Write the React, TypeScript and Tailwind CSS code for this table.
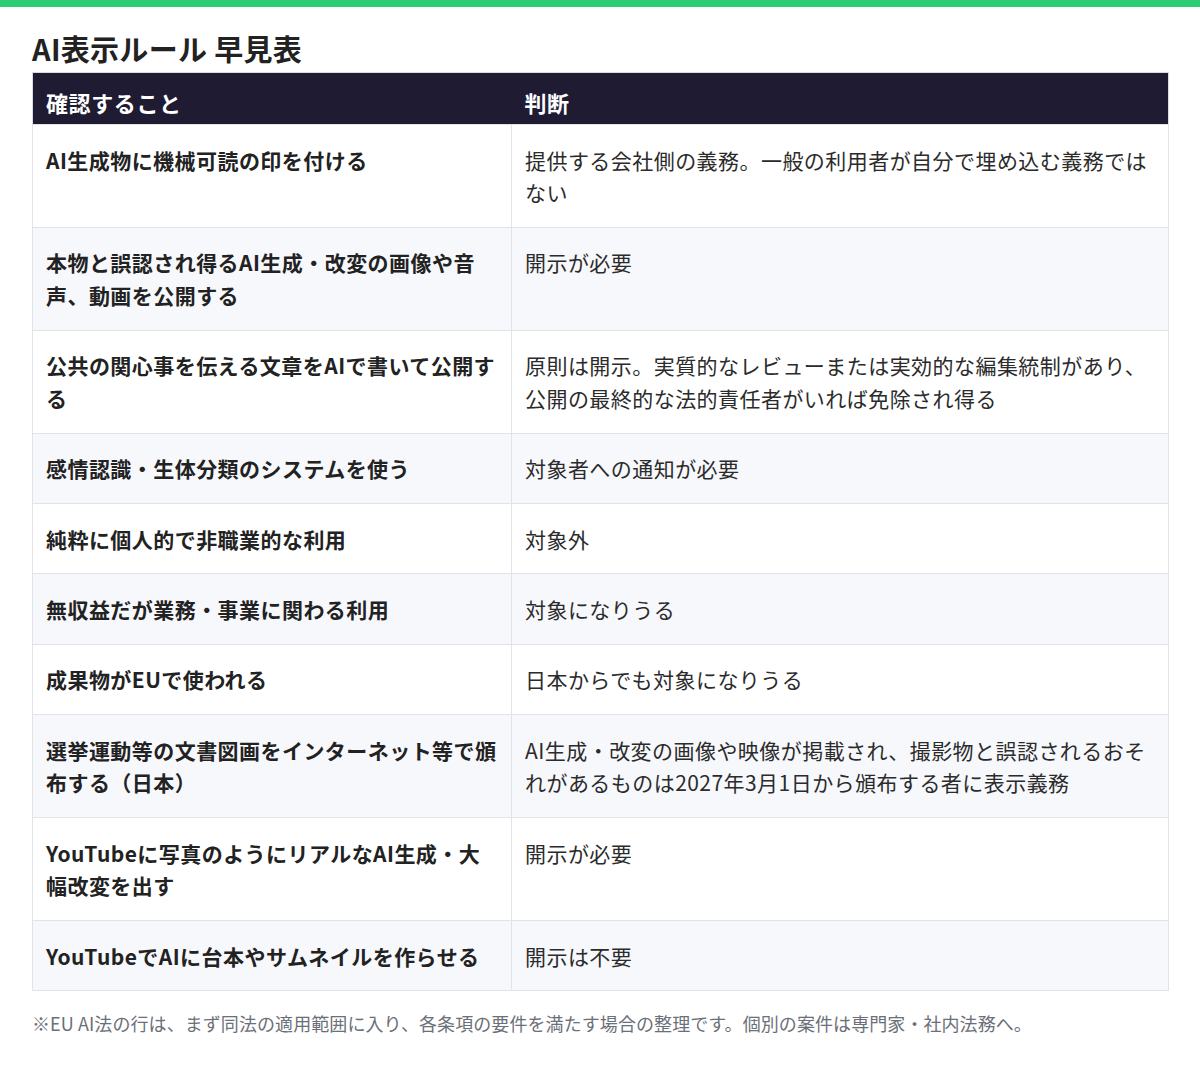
import React from "react";

const rows: [string, string][] = [
  ["AI生成物に機械可読の印を付ける", "提供する会社側の義務。一般の利用者が自分で埋め込む義務ではない"],
  ["本物と誤認され得るAI生成・改変の画像や音声、動画を公開する", "開示が必要"],
  ["公共の関心事を伝える文章をAIで書いて公開する", "原則は開示。実質的なレビューまたは実効的な編集統制があり、公開の最終的な法的責任者がいれば免除され得る"],
  ["感情認識・生体分類のシステムを使う", "対象者への通知が必要"],
  ["純粋に個人的で非職業的な利用", "対象外"],
  ["無収益だが業務・事業に関わる利用", "対象になりうる"],
  ["成果物がEUで使われる", "日本からでも対象になりうる"],
  ["選挙運動等の文書図画をインターネット等で頒布する（日本）", "AI生成・改変の画像や映像が掲載され、撮影物と誤認されるおそれがあるものは2027年3月1日から頒布する者に表示義務"],
  ["YouTubeに写真のようにリアルなAI生成・大幅改変を出す", "開示が必要"],
  ["YouTubeでAIに台本やサムネイルを作らせる", "開示は不要"],
];

export default function App() {
  return (
    <div
      className="min-h-[1085px] bg-white"
      style={{ fontFamily: '"Noto Sans CJK JP", "Noto Sans", sans-serif' }}
    >
      <div className="h-[7px] bg-[#2ecc71]" />
      <div className="pl-8 pr-[31px]">
        <h1 className="mt-[23px] mb-[6px] text-[29px] leading-[36px] font-bold tracking-[0.3px] text-[#222222]">
          AI表示ルール 早見表
        </h1>
        <table className="w-full border-collapse border border-[#d9dce3] text-[21px] leading-[32.5px] tracking-[0.45px]">
          <thead>
            <tr className="bg-[#1e1b33] text-white">
              <th className="w-[479px] h-[52px] px-[13px] pt-[7px] text-left text-[22px] font-bold tracking-[0.6px]">確認すること</th>
              <th className="h-[52px] px-[13px] pt-[7px] text-left text-[22px] font-bold tracking-[0.6px]">判断</th>
            </tr>
          </thead>
          <tbody>
            {rows.map(([a, b], i) => (
              <tr key={i} className={i % 2 === 1 ? "bg-[#f7f8fc]" : "bg-white"}>
                <td className="align-top border border-[#e1e3e9] px-[13px] pt-[18.5px] pb-[18.4px] font-bold text-[#222222]">
                  {a}
                </td>
                <td className="align-top border border-[#e1e3e9] px-[13px] pt-[18.5px] pb-[18.4px] text-[#2b2b2b]">
                  {b}
                </td>
              </tr>
            ))}
          </tbody>
        </table>
        <p className="mt-[18px] text-[18px] leading-[28px] tracking-[0.08px] text-[#6b6f78]">
          ※EU AI法の行は、まず同法の適用範囲に入り、各条項の要件を満たす場合の整理です。個別の案件は専門家・社内法務へ。
        </p>
      </div>
    </div>
  );
}
